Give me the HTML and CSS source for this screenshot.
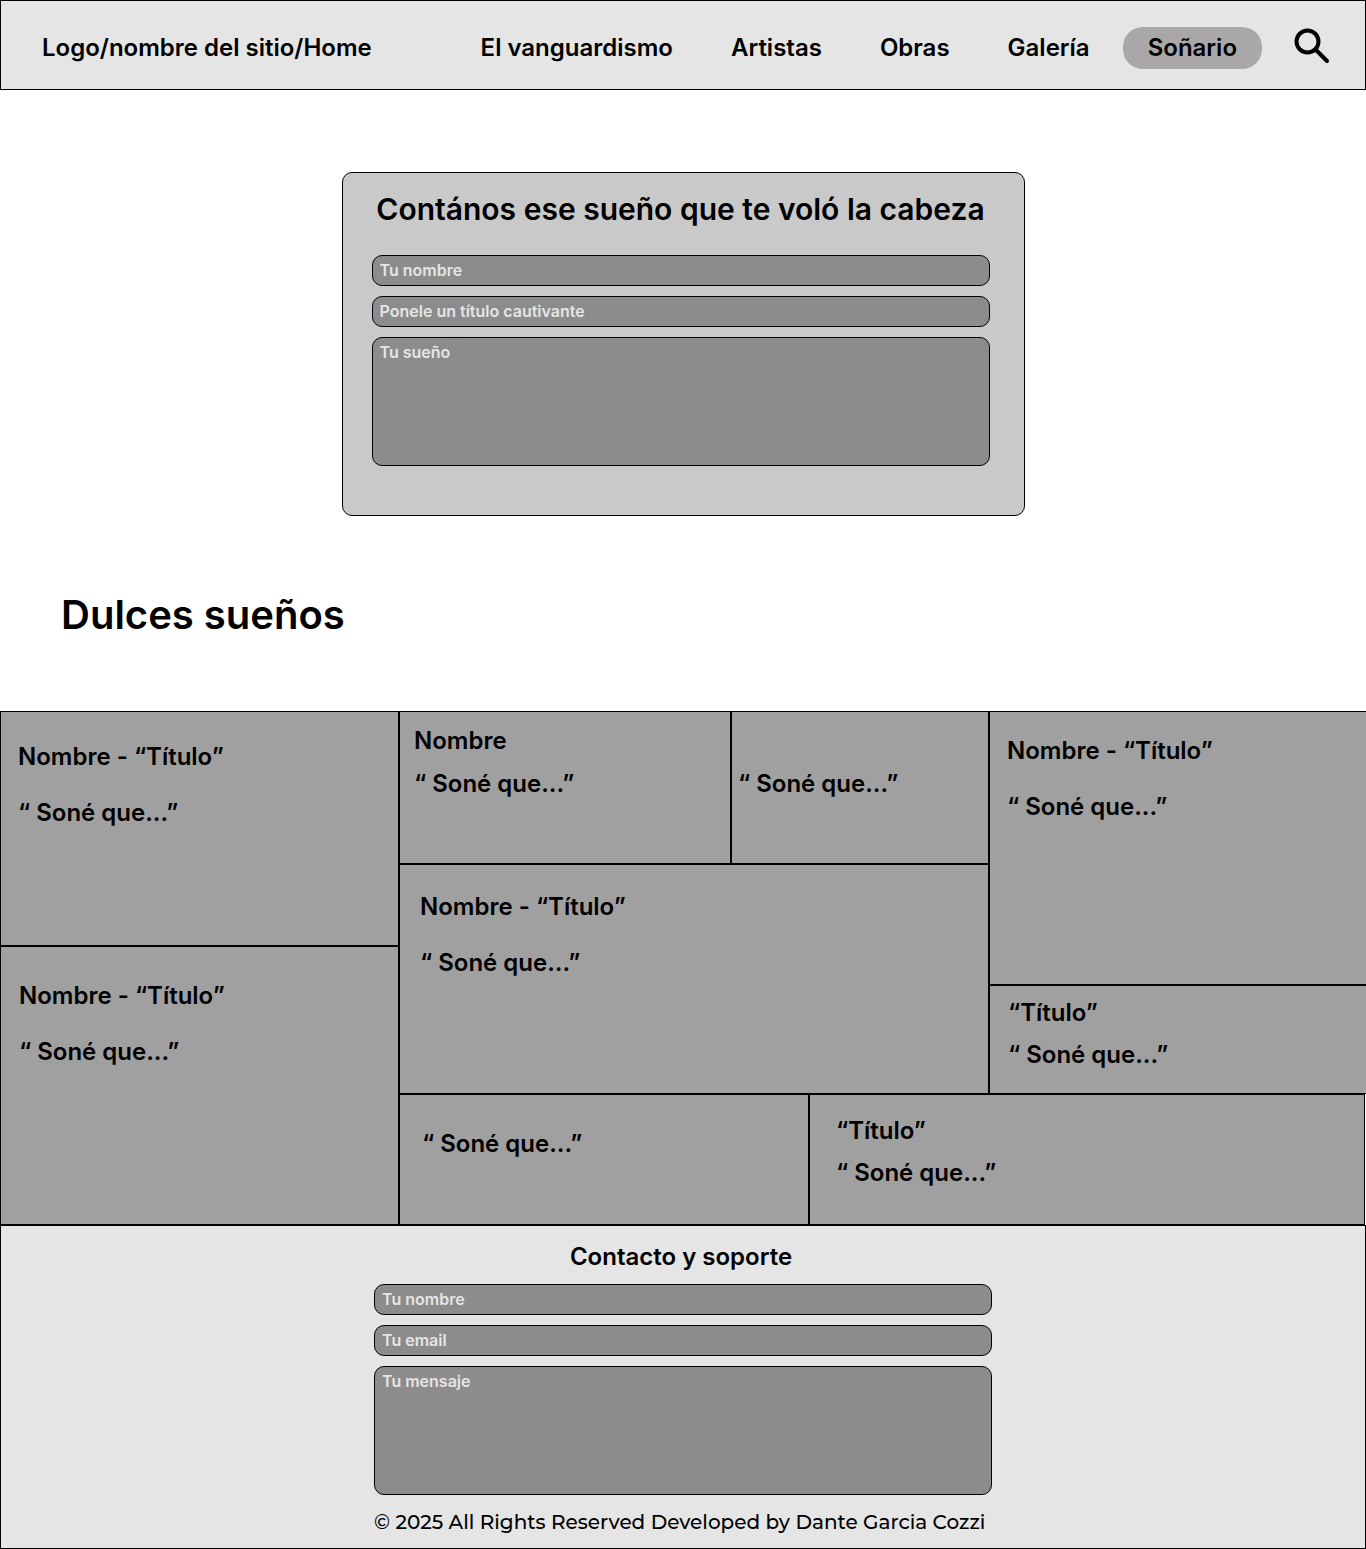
FILE: index.html
```html
<!DOCTYPE html>
<html lang="es">
<head>
  <meta charset="utf-8">
  <meta name="viewport" content="width=device-width, initial-scale=1">
  <title>Soñario</title>
  <link rel="stylesheet" href="styles.css">
</head>
<body>
  <header class="site-header">
    <a class="brand" href="#">Logo/nombre del sitio/Home</a>
    <nav class="site-nav">
      <a class="nav-link" href="#">El vanguardismo</a>
      <a class="nav-link" href="#">Artistas</a>
      <a class="nav-link" href="#">Obras</a>
      <a class="nav-link" href="#">Galería</a>
      <a class="nav-link nav-link-active" href="#" aria-current="page">Soñario</a>
    </nav>
    <button class="search-button" type="button" aria-label="Buscar">
      <svg class="search-icon" viewBox="0 0 36 36" aria-hidden="true">
        <circle cx="13.5" cy="13.5" r="11" fill="none" stroke="#000" stroke-width="4"/>
        <path d="M21.5 21.5 L33 33" fill="none" stroke="#000" stroke-width="4" stroke-linecap="round"/>
      </svg>
    </button>
  </header>

  <main>
    <form class="dream-card">
      <h1 class="dream-title">Contános ese sueño que te voló la cabeza</h1>
      <div class="fields">
        <input class="field" type="text" placeholder="Tu nombre" aria-label="Tu nombre">
        <input class="field" type="text" placeholder="Ponele un título cautivante" aria-label="Título">
        <textarea class="field field-area" placeholder="Tu sueño" aria-label="Tu sueño"></textarea>
      </div>
    </form>

    <h2 class="section-title">Dulces sueños</h2>

    <section class="mosaic">
      <div class="column column-left">
        <article class="dream dream-tall">
          <h3>Nombre - “Título”</h3>
          <p>“ Soné que...”</p>
        </article>
        <article class="dream dream-deep">
          <h3>Nombre - “Título”</h3>
          <p>“ Soné que...”</p>
        </article>
      </div>
      <div class="column column-main">
        <div class="upper">
          <div class="column column-center">
            <div class="pair">
              <article class="dream dream-compact">
                <h3>Nombre</h3>
                <p>“ Soné que...”</p>
              </article>
              <article class="dream dream-narrow">
                <p>“ Soné que...”</p>
              </article>
            </div>
            <article class="dream dream-wide">
              <h3>Nombre - “Título”</h3>
              <p>“ Soné que...”</p>
            </article>
          </div>
          <div class="column column-right">
            <article class="dream dream-side">
              <h3>Nombre - “Título”</h3>
              <p>“ Soné que...”</p>
            </article>
            <article class="dream dream-side dream-short">
              <h3>“Título”</h3>
              <p>“ Soné que...”</p>
            </article>
          </div>
        </div>
        <div class="lower">
          <article class="dream dream-quote">
            <p>“ Soné que...”</p>
          </article>
          <article class="dream dream-last">
            <h3>“Título”</h3>
            <p>“ Soné que...”</p>
          </article>
        </div>
      </div>
    </section>
  </main>

  <footer class="site-footer">
    <form class="contact">
      <h2 class="contact-title">Contacto y soporte</h2>
      <div class="fields">
        <input class="field" type="text" placeholder="Tu nombre" aria-label="Tu nombre">
        <input class="field" type="email" placeholder="Tu email" aria-label="Tu email">
        <textarea class="field field-area" placeholder="Tu mensaje" aria-label="Tu mensaje"></textarea>
      </div>
      <p class="copyright">© 2025 All Rights Reserved Developed by Dante Garcia Cozzi</p>
    </form>
  </footer>
</body>
</html>
```
FILE: styles.css
```css
* {
  box-sizing: border-box;
}

body {
  margin: 0;
  background: #fff;
  color: #000;
  font-family: Inter, "Liberation Sans", sans-serif;
  font-size: 24px;
  font-weight: 600;
  line-height: 30px;
}

h1, h2, h3, p {
  margin: 0;
  font-size: inherit;
  font-weight: inherit;
}

a {
  color: inherit;
  text-decoration: none;
}

/* Header */
.site-header {
  display: flex;
  align-items: center;
  min-height: 90px;
  padding: 6px 35px 0 41px;
  border: 1px solid #000;
  background: #e5e5e5;
}

.brand {
  margin-right: auto;
}

.site-nav {
  display: flex;
  gap: 8px;
}

.nav-link {
  padding: 6px 25px;
}

.nav-link-active {
  border-radius: 20px;
  background: #a9a7a8;
}

.search-button {
  display: flex;
  margin: 0 0 4px 32px;
  padding: 0;
  border: 0;
  background: none;
}

.search-icon {
  width: 36px;
  height: 36px;
}

/* Forms */
.dream-card {
  width: 50%;
  min-height: 344px;
  margin: 82px auto 0;
  padding: 16px 34px 49px 29px;
  border: 1px solid #000;
  border-radius: 10px;
  background: #c9c9c9;
}

.dream-title {
  margin-bottom: 26px;
  font-size: 30px;
  line-height: 40px;
  text-align: center;
}

.fields {
  display: flex;
  flex-direction: column;
  gap: 10px;
}

.field {
  display: block;
  width: 100%;
  height: 31px;
  margin: 0;
  padding: 3px 7px 5px;
  border: 1px solid #000;
  border-radius: 10px;
  background: #8c8c8c;
  color: #e5e5e5;
  font: inherit;
  font-size: 16px;
  line-height: 20px;
}

.field::placeholder {
  color: #e5e5e5;
  opacity: 1;
}

.field-area {
  height: 129px;
  padding-top: 4px;
  resize: none;
}

.section-title {
  margin: 74px 61px 71px;
  font-size: 40px;
  line-height: 50px;
}

/* Mosaic of dreams */
.mosaic {
  display: grid;
  grid-template-columns: 399fr 967fr;
}

.column {
  display: grid;
}

.column-left {
  grid-template-rows: minmax(235px, auto) minmax(279px, auto);
}

.column-main {
  grid-template-rows: minmax(383px, auto) minmax(131px, auto);
}

.upper {
  display: grid;
  grid-template-columns: 590fr 377fr;
}

.column-center {
  grid-template-rows: minmax(153px, auto) minmax(230px, auto);
}

.pair {
  display: grid;
  grid-template-columns: 332fr 258fr;
}

.column-right {
  grid-template-rows: minmax(274px, auto) minmax(109px, auto);
}

.lower {
  display: grid;
  grid-template-columns: 410fr 556fr;
  padding-right: 1px;
}

.dream {
  display: flex;
  flex-direction: column;
  gap: 26px;
  padding: 30px 17px;
  border: 1px solid #000;
  background: #a0a0a0;
}

.dream-deep {
  padding: 34px 18px;
}

.dream-compact {
  gap: 13px;
  padding: 14px;
}

.dream-narrow {
  padding: 57px 6px;
}

.dream-wide {
  padding: 27px 20px;
}

.dream-side {
  padding: 24px 17px;
  border-right: 0;
}

.dream-short {
  gap: 12px;
  padding: 12px 18px;
}

.dream-quote {
  padding: 34px 22px;
}

.dream-last {
  gap: 12px;
  padding: 21px 26px;
}

/* Footer */
.site-footer {
  min-height: 324px;
  padding: 16px 24px 10px;
  border: 1px solid #000;
  background: #e5e5e5;
}

.contact {
  max-width: 618px;
  margin: 0 auto;
}

.contact-title {
  margin-bottom: 12px;
  padding-right: 4px;
  text-align: center;
}

.copyright {
  margin-top: 12px;
  font-family: Montserrat, Inter, sans-serif;
  font-size: 20px;
  font-weight: 500;
}
```
